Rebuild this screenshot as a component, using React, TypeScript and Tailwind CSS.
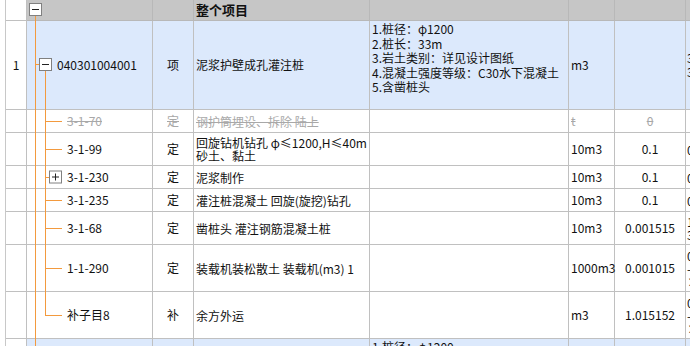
import React from "react";

const line = "border-r border-b border-[#c0c0c0]";
const orange = "bg-[#f39a3e]";

type Row = {
  h: string;
  code: string;
  kind: string;
  name: React.ReactNode;
  unit: string;
  qty: string;
  extra: React.ReactNode;
  dim?: boolean;
  box?: boolean;
  last?: boolean;
};

const rows: Row[] = [
  { h: "h-[23px]", code: "3-1-70", kind: "定", name: "钢护筒埋设、拆除 陆上", unit: "t", qty: "0", extra: "", dim: true },
  { h: "h-[33px]", code: "3-1-99", kind: "定", name: (<>回旋钻机钻孔 φ≤1200,H≤40m<br />砂土、黏土</>), unit: "10m3", qty: "0.1", extra: "0" },
  { h: "h-[23px]", code: "3-1-230", kind: "定", name: "泥浆制作", unit: "10m3", qty: "0.1", extra: "0", box: true },
  { h: "h-[23px]", code: "3-1-235", kind: "定", name: "灌注桩混凝土 回旋(旋挖)钻孔", unit: "10m3", qty: "0.1", extra: "0" },
  { h: "h-[33px]", code: "3-1-68", kind: "定", name: "凿桩头 灌注钢筋混凝土桩", unit: "10m3", qty: "0.001515", extra: (<>1<br />3</>) },
  { h: "h-[47px]", code: "1-1-290", kind: "定", name: "装载机装松散土 装载机(m3) 1", unit: "1000m3", qty: "0.001015", extra: (<>0<br />-<br />×</>) },
  { h: "h-[47px]", code: "补子目8", kind: "补", name: "余方外运", unit: "m3", qty: "1.015152", extra: (<>0<br />-<br />×</>), last: true },
];

function Box({ plus }: { plus?: boolean }) {
  return (
    <div className="w-[13px] h-[13px] border border-[#808080] bg-white flex items-center justify-center">
      <div className="relative w-[7px] h-[7px]">
        <div className="absolute left-0 right-0 top-[3px] h-px bg-[#222]" />
        {plus && <div className="absolute top-0 bottom-0 left-[3px] w-px bg-[#222]" />}
      </div>
    </div>
  );
}

function Features() {
  return (
    <div className="pl-[2px] pt-[1px] leading-[14.5px] whitespace-nowrap">
      1.桩径：φ1200<br />2.桩长：33m<br />3.岩土类别：详见设计图纸<br />4.混凝土强度等级：C30水下混凝土<br />5.含凿桩头
    </div>
  );
}

export default function App() {
  return (
    <div
      className="w-[690px] h-[346px] overflow-hidden bg-white text-[12px] text-[#111]"
      style={{ fontFamily: '"Noto Sans CJK SC", "Liberation Sans", sans-serif' }}
    >
      <div className="grid grid-cols-[6px_21px_126px_41px_176px_199px_46px_71px_1fr]">
        {/* header */}
        <div className="h-[21px] border-r border-[#c8c8c8]" />
        <div className={`h-[21px] ${line}`} />
        <div className="relative h-[21px] bg-[#c6c6c6] border-r border-b border-[#b8b8b8]">
          <div className="absolute left-[2px] top-[3px]"><Box /></div>
          <div className={`absolute left-[8px] top-[16px] -bottom-px w-px ${orange} z-20`} />
        </div>
        <div className="h-[21px] bg-[#c6c6c6] border-r border-b border-[#b8b8b8]" />
        <div className="h-[21px] bg-[#c6c6c6] border-r border-b border-[#b8b8b8] pl-[2px] flex items-center font-bold text-[13px]">整个项目</div>
        <div className="h-[21px] bg-[#c6c6c6] border-r border-b border-[#b8b8b8]" />
        <div className="h-[21px] bg-[#c6c6c6] border-r border-b border-[#b8b8b8]" />
        <div className="h-[21px] bg-[#c6c6c6] border-r border-b border-[#b8b8b8]" />
        <div className="h-[21px] bg-[#c6c6c6] border-b border-[#b8b8b8]" />

        {/* item row */}
        <div className="h-[89px] border-r border-[#c8c8c8]" />
        <div className={`h-[89px] ${line} flex items-center justify-center`}>1</div>
        <div className={`relative h-[89px] bg-[#dce9fc] ${line} flex items-center pl-[30px]`}>
          <div className={`absolute left-[8px] top-0 -bottom-px w-px ${orange} z-20`} />
          <div className={`absolute left-[8px] top-[43px] w-[4px] h-px ${orange}`} />
          <div className="absolute left-[12px] top-[37px]"><Box /></div>
          <div className={`absolute left-[18px] top-[50px] -bottom-px w-px ${orange} z-20`} />
          040301004001
        </div>
        <div className={`h-[89px] bg-[#dce9fc] ${line} flex items-center justify-center`}>项</div>
        <div className={`h-[89px] bg-[#dce9fc] ${line} flex items-center pl-[2px]`}>泥浆护壁成孔灌注桩</div>
        <div className={`h-[89px] bg-[#dce9fc] ${line} overflow-hidden`}><Features /></div>
        <div className={`h-[89px] bg-[#dce9fc] ${line} flex items-center pl-[2px]`}>m3</div>
        <div className={`h-[89px] bg-[#dce9fc] ${line}`} />
        <div className="h-[89px] bg-[#dce9fc] border-b border-[#c0c0c0] flex items-center pl-[1px] leading-[14px] overflow-hidden">
          <div>3<br />3</div>
        </div>

        {rows.map((r) => {
          const c = r.dim ? "text-[#a8a8a8] line-through" : "";
          return (
            <React.Fragment key={r.code}>
              <div className={`${r.h} border-r border-[#c8c8c8]`} />
              <div className={`${r.h} ${line}`} />
              <div className={`relative ${r.h} ${line} flex items-center pl-[40px]`}>
                <div className={`absolute left-[8px] top-0 -bottom-px w-px ${orange} z-20`} />
                <div className={`absolute left-[18px] top-0 w-px ${orange} z-20 ${r.last ? "h-1/2" : "-bottom-px"}`} />
                {r.box ? (
                  <>
                    <div className={`absolute left-[18px] top-1/2 w-[4px] h-px ${orange}`} />
                    <div className="absolute left-[22px] top-1/2 -translate-y-1/2"><Box plus /></div>
                  </>
                ) : (
                  <div className={`absolute left-[18px] top-1/2 w-[17px] h-px ${orange}`} />
                )}
                <span className={c}>{r.code}</span>
              </div>
              <div className={`${r.h} ${line} flex items-center justify-center ${c}`}>{r.kind}</div>
              <div className={`${r.h} ${line} flex items-center pl-[2px] leading-[13px] whitespace-nowrap ${c}`}>
                <div>{r.name}</div>
              </div>
              <div className={`${r.h} ${line}`} />
              <div className={`${r.h} ${line} flex items-center pl-[2px] ${c}`}>{r.unit}</div>
              <div className={`${r.h} ${line} flex items-center justify-center ${c}`}>{r.qty}</div>
              <div className={`${r.h} border-b border-[#c0c0c0] flex items-center pl-[1px] leading-[13px] overflow-hidden`}>
                <div>{r.extra}</div>
              </div>
            </React.Fragment>
          );
        })}

        {/* next item (cut off) */}
        <div className="h-[30px] border-r border-[#c8c8c8]" />
        <div className={`h-[30px] ${line}`} />
        <div className={`relative h-[30px] bg-[#dce9fc] ${line}`}>
          <div className={`absolute left-[8px] top-0 bottom-0 w-px ${orange}`} />
        </div>
        <div className={`h-[30px] bg-[#dce9fc] ${line}`} />
        <div className={`h-[30px] bg-[#dce9fc] ${line}`} />
        <div className={`h-[30px] bg-[#dce9fc] ${line} overflow-hidden`}><Features /></div>
        <div className={`h-[30px] bg-[#dce9fc] ${line}`} />
        <div className={`h-[30px] bg-[#dce9fc] ${line}`} />
        <div className="h-[30px] bg-[#dce9fc] border-b border-[#c0c0c0]" />
      </div>
    </div>
  );
}
